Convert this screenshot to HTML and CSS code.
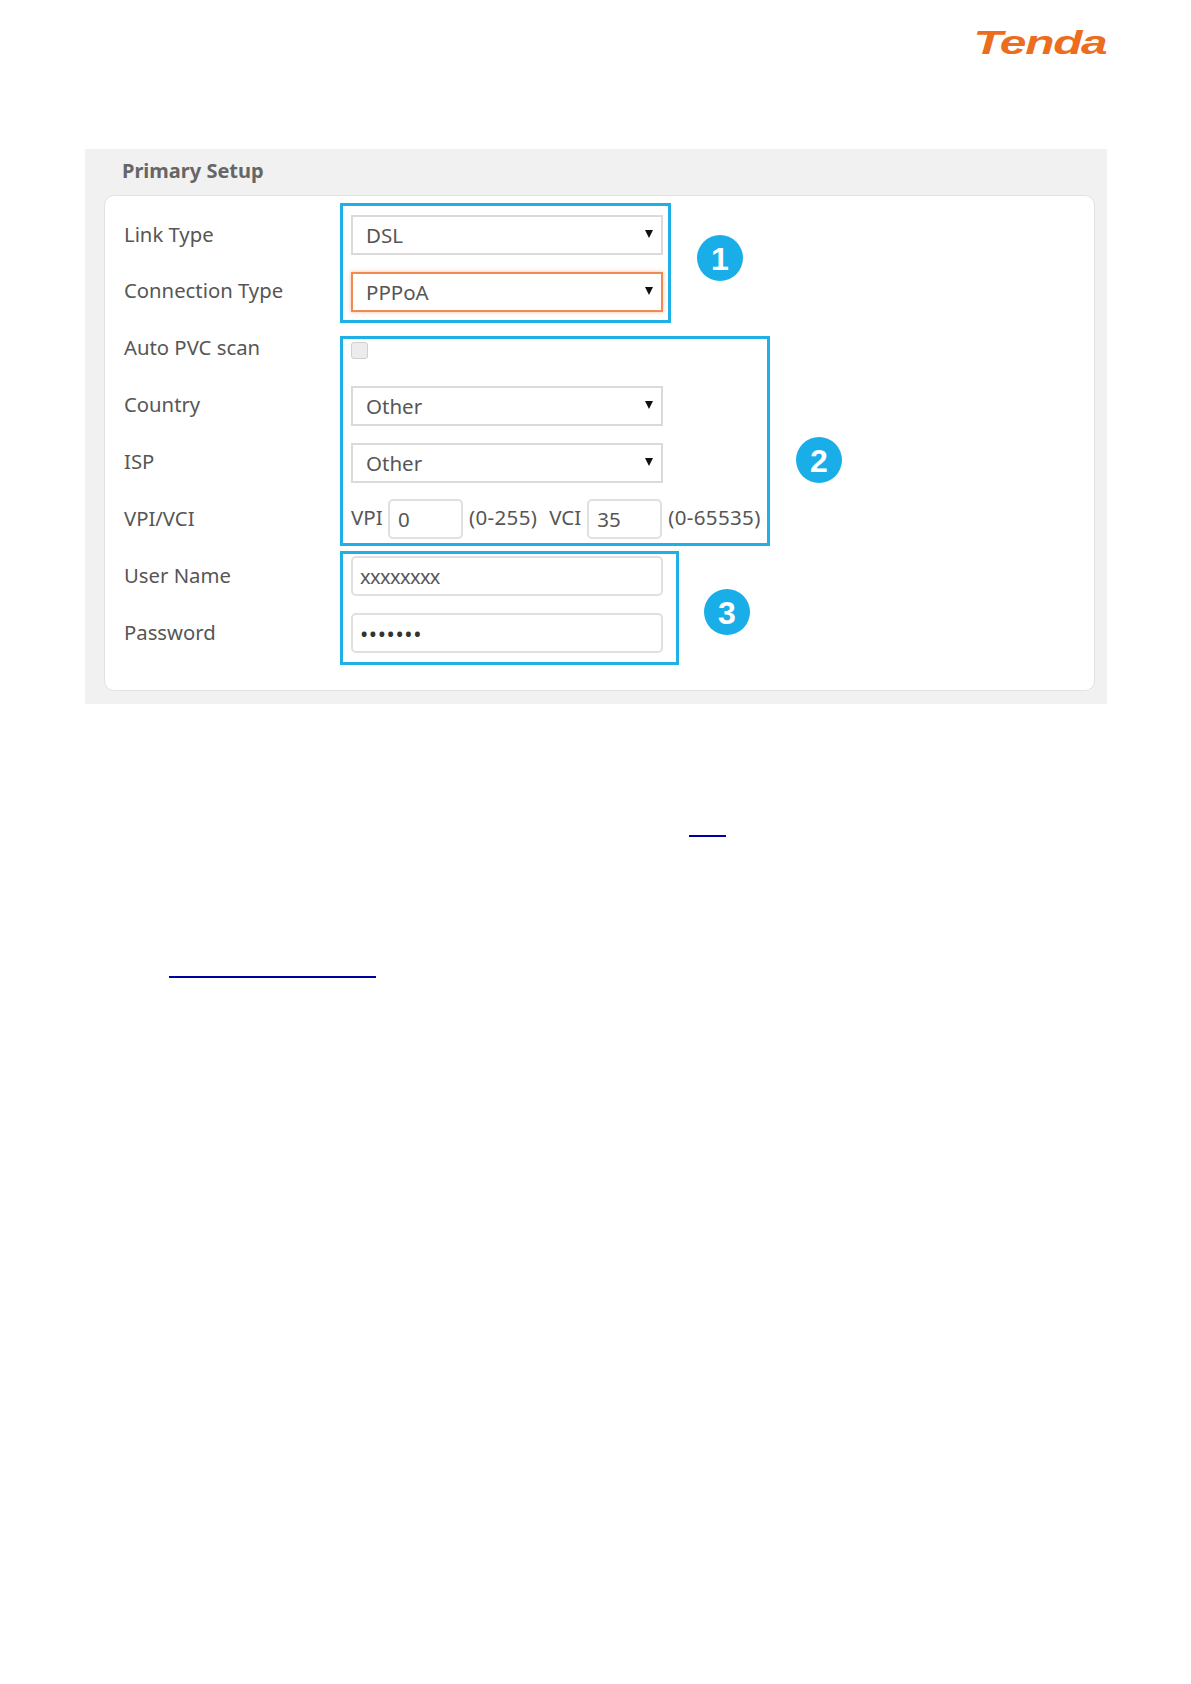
FILE: index.html
```html
<!DOCTYPE html>
<html lang="en">
<head>
<meta charset="utf-8">
<title>Primary Setup</title>
<link rel="stylesheet" href="styles.css">
</head>
<body>
<header class="top">
  <div class="logo"><span class="logo-text">Tenda</span></div>
</header>
<section class="panel">
  <h2 class="panel-title">Primary Setup</h2>
  <div class="card">
    <div class="form">
      <label class="lbl">Link Type</label>
      <div class="sel"><select class="ctl"><option>DSL</option></select></div>
      <label class="lbl">Connection Type</label>
      <div class="sel"><select class="ctl ctl-focus"><option>PPPoA</option></select></div>
      <label class="lbl">Auto PVC scan</label>
      <div class="chk-cell"><span class="chk"></span></div>
      <label class="lbl">Country</label>
      <div class="sel"><select class="ctl"><option>Other</option></select></div>
      <label class="lbl">ISP</label>
      <div class="sel"><select class="ctl"><option>Other</option></select></div>
      <label class="lbl">VPI/VCI</label>
      <div class="vp">
        <span class="vp-name">VPI</span><input class="txt txt-s" value="0"><span class="vp-range">(0-255)</span>
        <span class="vp-name vp-second">VCI</span><input class="txt txt-s txt-vci" value="35"><span class="vp-range vp-range-2">(0-65535)</span>
      </div>
      <label class="lbl">User Name</label>
      <div><input class="txt txt-w" value="xxxxxxxx"></div>
      <label class="lbl">Password</label>
      <div><input class="txt txt-w txt-pw" type="password" value="1234567"></div>
    </div>
    <div class="mark mark-1"></div>
    <div class="mark mark-2"></div>
    <div class="mark mark-3"></div>
    <span class="badge badge-1">1</span>
    <span class="badge badge-2">2</span>
    <span class="badge badge-3">3</span>
  </div>
</section>
<div class="link link-a"></div>
<div class="link link-b"></div>
</body>
</html>
```
FILE: styles.css
```css
* { box-sizing: border-box; }
html, body { margin: 0; background: #fff; }
body {
  width: 1191px;
  height: 1684px;
  overflow: hidden;
  font-family: "Noto Sans", "Open Sans", sans-serif;
  font-size: 20.5px;
  color: #565656;
}
.top {
  height: 149px;
  padding: 25px 85px 0 0;
  display: flex;
  justify-content: flex-end;
  align-items: flex-start;
}
.logo {
  width: 129px;
  height: 33px;
  display: flex;
  justify-content: flex-end;
  align-items: flex-end;
}
.logo-text {
  font-family: "Liberation Sans", sans-serif;
  font-weight: 700;
  font-style: italic;
  font-size: 38px;
  line-height: 33px;
  letter-spacing: -1px;
  color: #ec6d1e;
  white-space: nowrap;
  transform: scale(1.26, .88);
  transform-origin: right bottom;
}
.panel {
  margin-left: 85px;
  width: 1022px;
  height: 555px;
  padding: 0 12px 13px 19px;
  background: #f1f1f1;
  display: flex;
  flex-direction: column;
}
.panel-title {
  margin: 0;
  height: 46px;
  padding-left: 18px;
  font-size: 20px;
  font-weight: 700;
  line-height: 44px;
  color: #666;
}
.card {
  position: relative;
  flex: 1;
  padding: 19px 0 0 19px;
  background: #fff;
  border: 1px solid #e2e2e2;
  border-radius: 10px;
}
.form {
  display: grid;
  grid-template-columns: 227px 430px;
  grid-auto-rows: 40px;
  row-gap: 16.9px;
  align-items: center;
}
.lbl { font-size: 20.3px; line-height: 40px; margin-top: -3px; white-space: nowrap; }
.sel { position: relative; width: 312px; height: 40px; }
.sel::after {
  content: "";
  position: absolute;
  right: 10px;
  top: 15px;
  border-left: 4px solid transparent;
  border-right: 4px solid transparent;
  border-top: 8px solid #111;
}
.ctl {
  appearance: none;
  display: block;
  width: 312px;
  height: 40px;
  padding: 0 0 0 13px;
  font: inherit;
  color: #565656;
  background: #fff;
  border: 2px solid #dadada;
  border-radius: 0;
  outline: none;
}
.ctl-focus {
  border-color: #ee8a52;
  box-shadow: 0 0 4px rgba(238, 138, 82, .55);
}
.chk-cell { height: 40px; padding-top: 13px; }
.chk {
  display: block;
  width: 17px;
  height: 17px;
  background: #ececec;
  border: 1px solid #cfcfcf;
  border-radius: 3px;
}
.txt {
  display: block;
  height: 40px;
  font: inherit;
  color: #565656;
  background: #fff;
  border: 2px solid #e0e0e0;
  border-radius: 5px;
  outline: none;
}
.txt-w { width: 312px; padding: 0 0 0 7px; font-size: 20px; letter-spacing: -.6px; }
.txt-pw { font-size: 22px; letter-spacing: .6px; color: #333; }
.txt-s { width: 75px; padding: 0 0 0 8px; }
.txt-vci { width: 75px; padding-left: 8px; }
.vp { display: flex; align-items: center; height: 40px; }
.vp-name { width: 37px; margin-top: -4px; }
.vp-range { margin-left: 6px; margin-top: -4px; white-space: nowrap; letter-spacing: .35px; }
.vp-range-2 { margin-left: 6px; }
.vp-second { margin-left: 12px; width: 38px; }
.mark {
  position: absolute;
  border: 3px solid #1fb0e6;
  pointer-events: none;
}
.mark-1 { left: 235px; top: 7px; width: 331px; height: 120px; }
.mark-2 { left: 235px; top: 140px; width: 430px; height: 210px; }
.mark-3 { left: 235px; top: 355px; width: 339px; height: 114px; }
.badge {
  position: absolute;
  width: 46px;
  height: 46px;
  border-radius: 50%;
  background: #1aaee8;
  color: #fff;
  font-family: "Liberation Sans", sans-serif;
  font-weight: 700;
  font-size: 32px;
  line-height: 48px;
  text-align: center;
}
.badge-1 { left: 592px; top: 39px; }
.badge-2 { left: 691px; top: 241px; }
.badge-3 { left: 599px; top: 393px; }
.link { height: 2px; background: #0000a0; }
.link-a { width: 37px; margin: 131px 0 0 689px; }
.link-b { width: 207px; margin: 139px 0 0 169px; }
```
